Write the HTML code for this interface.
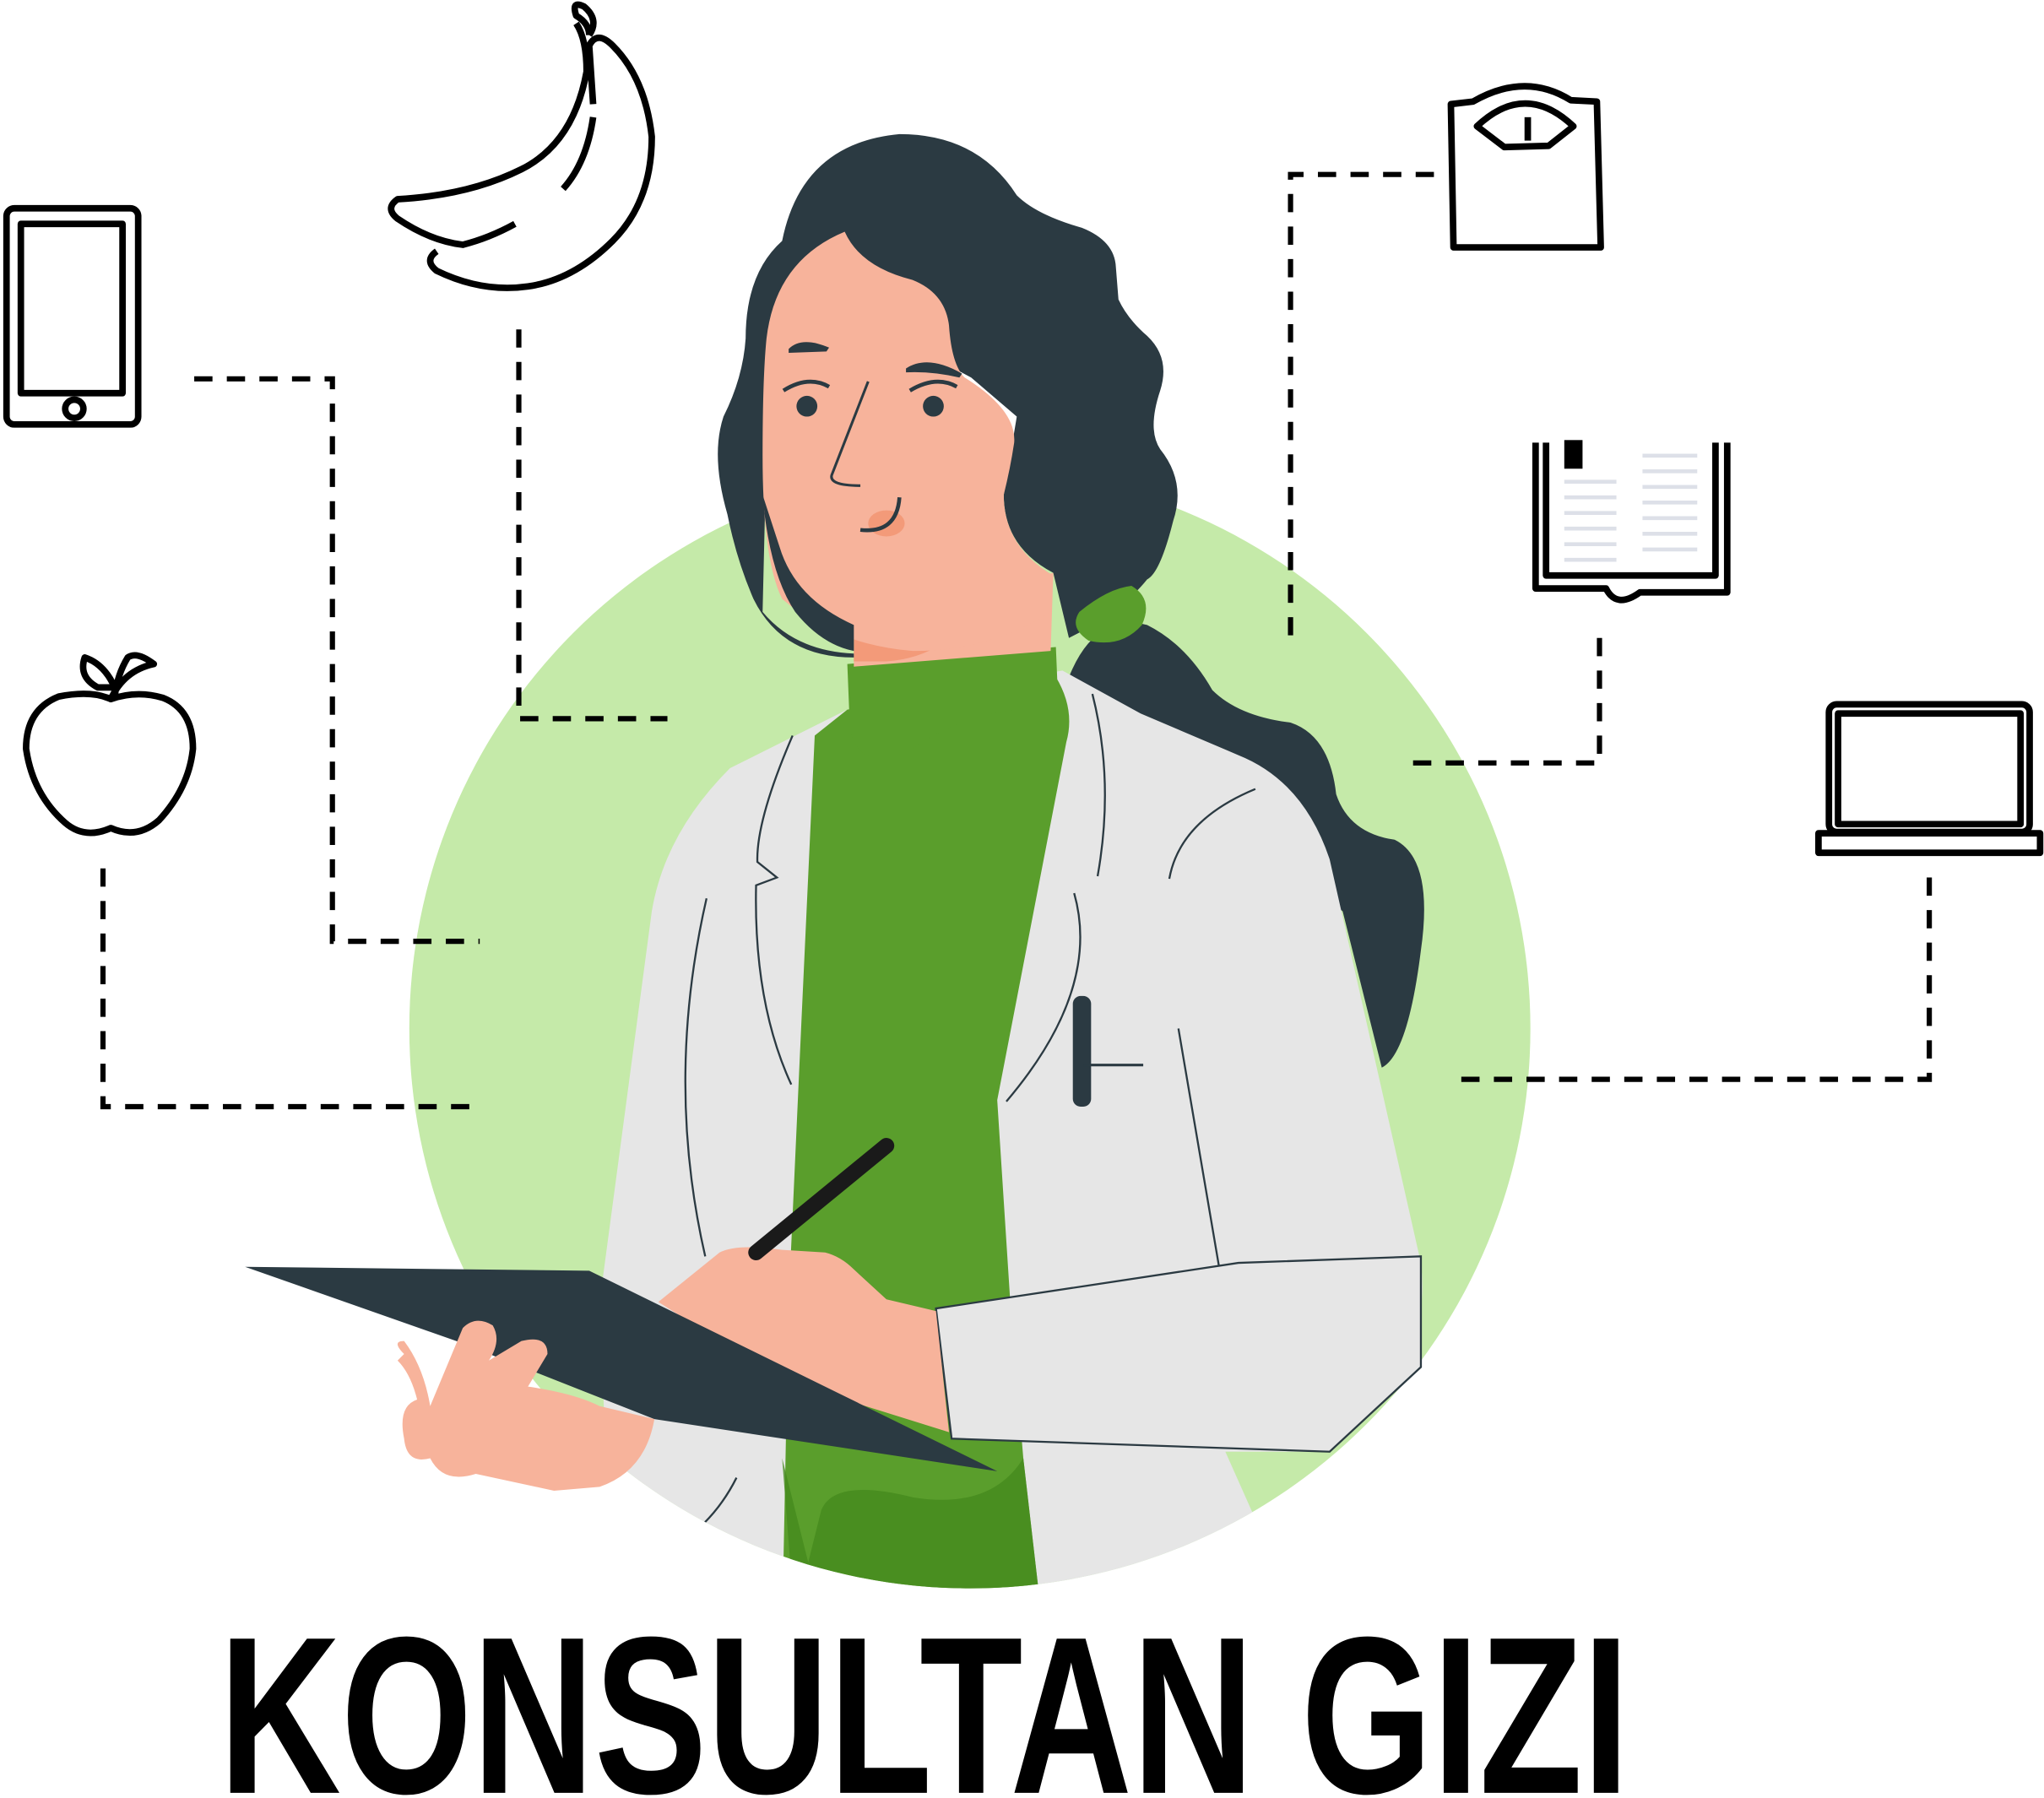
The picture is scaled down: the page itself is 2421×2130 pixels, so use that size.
<!DOCTYPE html>
<html><head><meta charset="utf-8"><style>
html,body{margin:0;padding:0;background:#fff;}
svg{display:block;}
</style></head><body>
<svg width="2421" height="2130" viewBox="0 0 1568 1381" preserveAspectRatio="none" xmlns="http://www.w3.org/2000/svg">
<defs><clipPath id="cc"><circle cx="744" cy="790" r="430"/></clipPath></defs>
<rect width="1568" height="1381" fill="#fff"/>
<!-- green circle -->
<circle cx="744" cy="790" r="430" fill="#c5eaa9"/>
<!-- dashed connectors -->
<g fill="none" stroke="#000" stroke-width="4" stroke-dasharray="14 11">
<path d="M149 291H255V723H368"/>
<path d="M398 253V552H512"/>
<path d="M79 667V850H366"/>
<path d="M1100 134H990V492"/>
<path d="M1227 490V586H1073"/>
<path d="M1480 674V829H1113"/>
</g>
<g clip-path="url(#cc)">
<!-- hair back/ponytail -->
<path d="M820 520 Q840 470 880 480 Q910 495 930 530 Q950 550 990 555 Q1020 565 1025 610 Q1035 640 1070 645 Q1100 660 1090 730 Q1080 810 1060 820 L1030 700 Z" fill="#2b3a42"/>
<!-- coat -->
<path d="M560 590 Q510 640 500 700 L460 1000 L470 1250 L1000 1250 L940 1115 L1020 1115 Q1100 1050 1090 970 L1020 660 Q1000 600 950 580 L875 548 L815 515 L650 545 Z" fill="#e6e6e6"/>
<!-- green shirt -->
<path d="M625 565 L650 545 L810 520 Q825 545 818 570 L765 845 L775 1000 L785 1120 L800 1250 L600 1250 L605 1000 L615 780 Z" fill="#5a9e2c"/>
<path d="M650 510 L810 497 L812 545 Q750 540 700 575 Q660 595 652 560 Z" fill="#5a9e2c"/>
<path d="M600 1120 L610 1250 L800 1250 L785 1120 Q760 1160 700 1150 Q640 1135 630 1160 L620 1200 Z" fill="#458a1e" opacity=".8"/>
<g fill="none" stroke="#2b3a42" stroke-width="1.5">
<path d="M608 565 Q580 630 581 662 L596 674 L580 680 Q578 770 607 833"/>
<path d="M542 690 Q510 830 541 965"/>
<path d="M838 533 Q855 600 842 673"/>
<path d="M963 606 Q905 630 897 675"/>
<path d="M824 686 Q845 760 772 846"/>
<path d="M904 790 L935 972"/>
<path d="M565 1135 Q555 1155 540 1170"/>
</g>
</g>
<!-- neck -->
<path d="M655 480 L808 440 L806 500 L655 512 Z" fill="#f7b39b"/>
<path d="M655 490 Q710 485 752 465 Q725 505 680 508 L655 508 Z" fill="#f39a79"/>
<!-- hair -->
<path d="M600 185 Q615 110 690 103 Q750 103 780 150 Q795 165 830 175 Q855 185 856 205 L858 230 Q865 245 880 258 Q898 275 890 300 Q880 330 890 345 Q910 370 900 400 Q890 440 880 445 Q860 470 820 490 L808 440 Q770 420 770 380 L780 320 L745 290 L670 250 L650 190 Q610 190 590 260 L585 470 Q610 500 655 502 L655 505 Q600 505 578 460 Q565 430 558 395 Q545 350 555 320 Q570 290 572 260 Q572 210 600 185Z" fill="#2b3a42"/>
<!-- face -->
<path d="M648 178 Q660 205 700 215 Q725 225 728 250 Q730 280 740 290 Q780 315 778 340 Q775 360 770 380 Q770 420 808 442 L806 470 Q760 500 700 500 Q640 495 600 460 Q585 430 585 350 Q585 290 588 260 Q595 200 648 178Z" fill="#f7b39b"/>
<path d="M585 380 Q590 440 610 470 Q630 495 655 500 L655 480 Q610 460 598 420 Z" fill="#2b3a42"/>
<g fill="#2b3a42">
<path d="M605 268 Q615 258 636 267 L634 270 L605 271Z"/>
<path d="M695 283 Q712 272 738 287 L736 290 Q715 285 695 286Z"/>
<circle cx="619" cy="312" r="8"/><circle cx="716" cy="312" r="8"/>
<path d="M601 300 Q620 288 636 297" stroke="#2b3a42" stroke-width="3" fill="none"/>
<path d="M698 300 Q718 288 734 297" stroke="#2b3a42" stroke-width="3" fill="none"/>
</g>
<path d="M666 293 L638 365 Q636 373 660 373" fill="none" stroke="#2b3a42" stroke-width="2"/>
<ellipse cx="680" cy="402" rx="14" ry="10" fill="#f39a79"/>
<path d="M660 407 Q688 410 690 382" fill="none" stroke="#2b3a42" stroke-width="3"/>
<path d="M828 470 Q850 452 868 450 Q885 460 876 480 Q860 498 835 492 Q820 482 828 470Z" fill="#5a9e2c"/>
<rect x="823" y="765" width="14" height="85" rx="6" fill="#2b3a42"/>
<path d="M831 818 H877" stroke="#2b3a42" stroke-width="2"/>
<path d="M718 1005 L950 970 L1090 965 L1090 1050 L1020 1115 L730 1105 Z" fill="#e6e6e6" stroke="#2b3a42" stroke-width="1.5"/>
<path d="M505 1000 L552 962 Q565 955 600 960 L633 962 Q645 965 655 975 L680 998 L718 1007 L728 1100 L600 1060 Z" fill="#f7b39b"/>
<path d="M580 962 L680 880" stroke="#1a1a1a" stroke-width="12" stroke-linecap="round"/>
<path d="M188 973 L452 976 L765 1130 L502 1090 L350 1030 Z" fill="#2b3a42"/>
<path d="M310 1040 Q300 1030 310 1030 Q325 1050 330 1080 L355 1020 Q365 1010 378 1018 Q385 1030 375 1045 L400 1030 Q420 1025 420 1040 L405 1065 Q440 1070 460 1080 L502 1090 Q495 1130 460 1142 L425 1145 L365 1132 Q340 1140 330 1120 Q312 1125 310 1105 Q305 1080 320 1075 Q315 1055 305 1045Z" fill="#f7b39b"/>
<g fill="none" stroke="#000" stroke-width="5" stroke-linejoin="round">
<rect x="5" y="160" width="101" height="166" rx="6"/>
<rect x="16" y="172" width="78" height="130"/>
<circle cx="57" cy="314" r="7"/>
<path d="M442 18 Q450 30 450 55 Q440 110 400 130 Q360 150 305 153 Q295 160 305 168 Q330 185 355 188 Q375 183 395 172 M335 193 Q325 200 335 208 Q370 225 405 220 Q440 215 470 185 Q500 155 500 105 Q495 60 470 35 Q458 23 452 35 L455 80 M455 90 Q450 125 432 145"/>
<path d="M452 27 Q460 15 448 5 Q438 0 442 12 Q452 18 452 27"/>
<path d="M85 537 Q70 530 45 535 Q20 545 20 575 Q25 610 50 632 Q65 645 85 636 Q105 645 122 630 Q145 605 148 575 Q148 545 125 536 Q105 530 85 537Z M85 537 Q95 515 118 510 Q105 500 98 505 Q90 518 88 535 M88 528 Q80 510 65 505 Q60 520 75 528Z"/>
<path d="M1113 80 L1130 78 Q1170 55 1205 77 L1225 78 L1228 190 L1115 190Z"/>
<path d="M1133 97 Q1170 62 1207 97 L1188 112 L1154 113Z"/>
<path d="M1172 90 V108"/>
<path d="M1178 340 V452 H1232 Q1240 468 1258 455 H1325 V340 M1186 340 V442 H1316 V340"/>
<rect x="1403" y="541" width="154" height="98" rx="6"/>
<rect x="1410" y="548" width="140" height="85"/>
<path d="M1395 640 H1565 V655 H1395Z"/>
</g>
<rect x="1200" y="338" width="14" height="22" fill="#000"/>
<g stroke="#dde0e8" stroke-width="3"><path d="M1200 370H1240M1200 382H1240M1200 394H1240M1200 406H1240M1200 418H1240M1200 430H1240M1260 350H1302M1260 362H1302M1260 374H1302M1260 386H1302M1260 398H1302M1260 410H1302M1260 422H1302"/></g>
<text x="168" y="1377" font-family="Liberation Sans, sans-serif" font-weight="bold" font-size="172" textLength="1082" lengthAdjust="spacingAndGlyphs" fill="#000">KONSULTAN GIZI</text>
</svg>
</body></html>
